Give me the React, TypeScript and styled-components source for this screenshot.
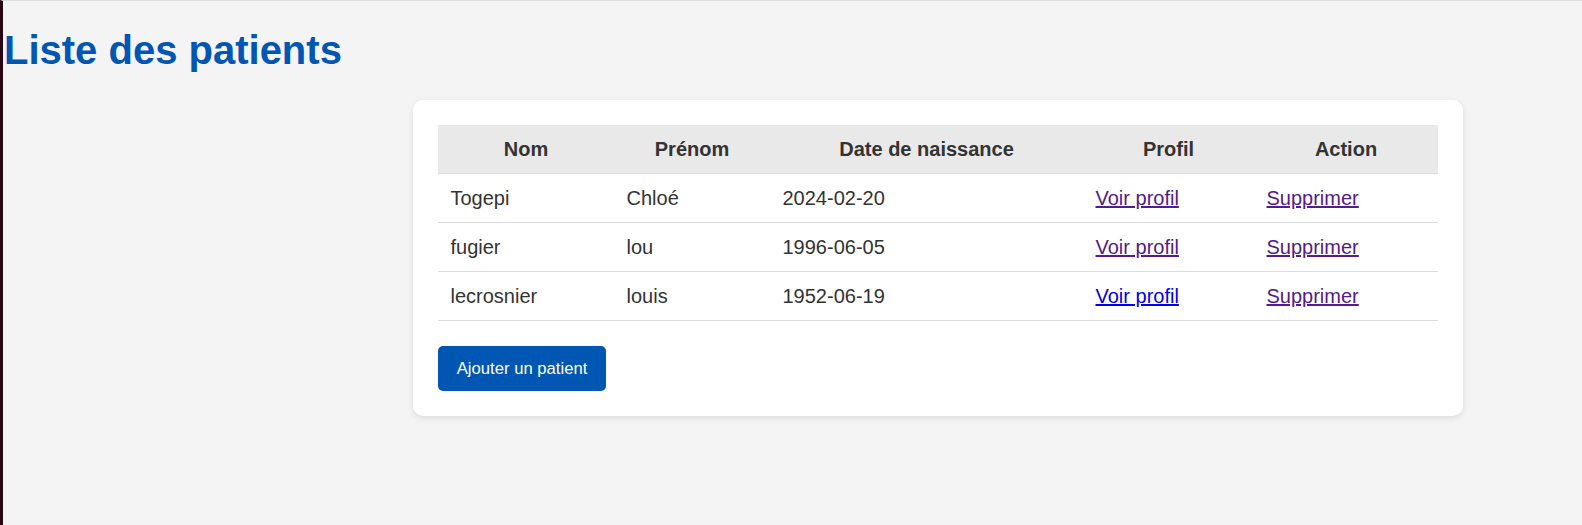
import React from "react";
import styled, { createGlobalStyle } from "styled-components";

const GlobalStyle = createGlobalStyle`
  html, body { margin: 0; padding: 0; }
  body {
    background: #f4f4f4;
    font-family: "Liberation Sans", Arial, sans-serif;
    color: #333;
  }
`;

const Page = styled.div`
  min-height: 524px;
  border-left: 3px solid #2a0614;
  border-top: 1px solid #dcdcdc;
  padding-left: 1px;
`;

const Title = styled.h1`
  margin: 26px 0 27px;
  font-size: 40px;
  font-weight: bold;
  color: #0056b3;
  line-height: 46px;
`;

const Card = styled.div`
  margin-left: 409px;
  width: 1000px;
  padding: 25px;
  background: #fff;
  border-radius: 10px;
  box-shadow: 0 2px 6px rgba(0, 0, 0, 0.1);
`;

const Table = styled.table`
  width: 1000px;
  border-collapse: collapse;
  table-layout: fixed;
  font-size: 20px;
`;

const Th = styled.th<{ $w: number }>`
  box-sizing: border-box;
  width: ${(p) => p.$w}px;
  background: #e9e9e9;
  padding: 12.5px;
  font-weight: bold;
  text-align: center;
  color: #333;
  border-bottom: 1px solid #ddd;
  line-height: 23px;
`;

const Td = styled.td`
  padding: 12.5px;
  text-align: left;
  color: #333;
  border-bottom: 1px solid #ddd;
  line-height: 23px;
`;

const Link = styled.a<{ $visited?: boolean }>`
  color: ${(p) => (p.$visited ? "#551a8b" : "#0000ee")};
  text-decoration: underline;
  cursor: pointer;
`;

const AddButton = styled.button`
  margin-top: 25px;
  height: 45px;
  padding: 0 18.75px;
  background: #0056b3;
  color: #fff;
  border: none;
  border-radius: 5px;
  font-family: "Liberation Sans", Arial, sans-serif;
  font-size: 16.67px;
  cursor: pointer;
`;

const patients = [
  { nom: "Togepi", prenom: "Chloé", date: "2024-02-20", visited: true },
  { nom: "fugier", prenom: "lou", date: "1996-06-05", visited: true },
  { nom: "lecrosnier", prenom: "louis", date: "1952-06-19", visited: false },
];

export default function App() {
  return (
    <>
      <GlobalStyle />
      <Page>
        <Title>Liste des patients</Title>
        <Card>
          <Table>
            <thead>
              <tr>
                <Th $w={176}>Nom</Th>
                <Th $w={156}>Prénom</Th>
                <Th $w={313}>Date de naissance</Th>
                <Th $w={171}>Profil</Th>
                <Th $w={184}>Action</Th>
              </tr>
            </thead>
            <tbody>
              {patients.map((p) => (
                <tr key={p.nom}>
                  <Td>{p.nom}</Td>
                  <Td>{p.prenom}</Td>
                  <Td>{p.date}</Td>
                  <Td>
                    <Link $visited={p.visited}>Voir profil</Link>
                  </Td>
                  <Td>
                    <Link $visited>Supprimer</Link>
                  </Td>
                </tr>
              ))}
            </tbody>
          </Table>
          <AddButton>Ajouter un patient</AddButton>
        </Card>
      </Page>
    </>
  );
}
